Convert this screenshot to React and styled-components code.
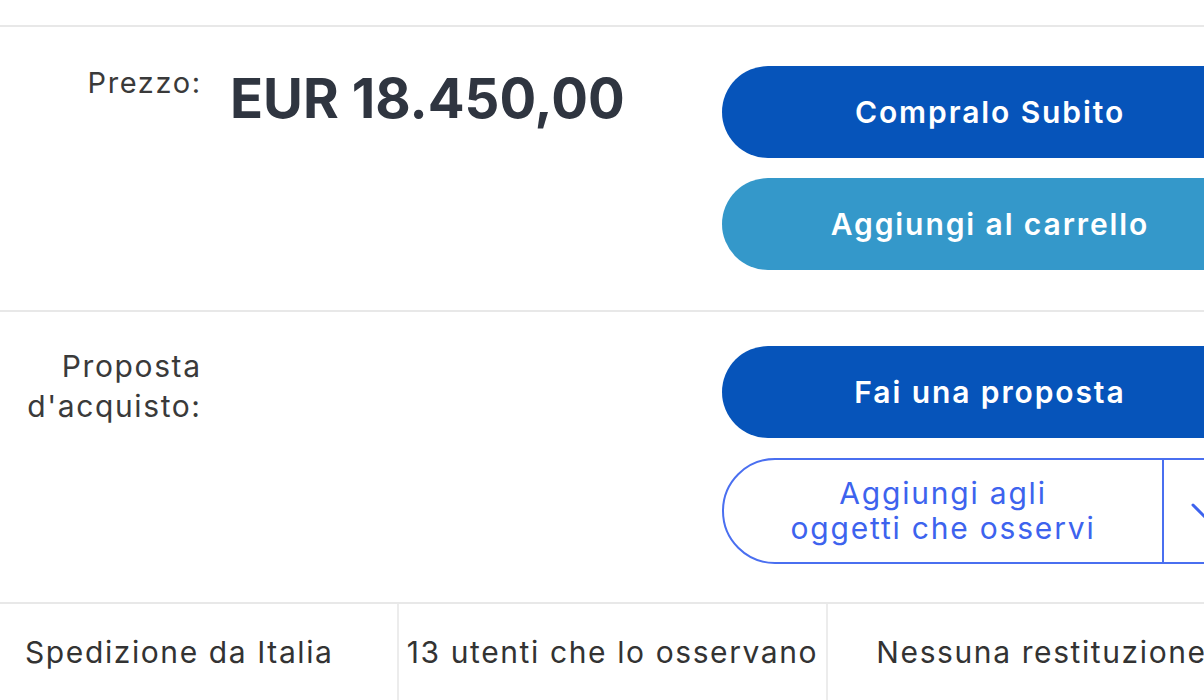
import React from 'react'
import styled, { createGlobalStyle } from 'styled-components'

const GlobalStyle = createGlobalStyle`
  html, body {
    margin: 0;
    padding: 0;
    background: #ffffff;
    overflow: hidden;
  }
  body {
    font-family: Inter, "Open Sans", Arial, sans-serif;
    color: #333333;
  }
`

const Page = styled.div`
  width: 1300px;
  padding-top: 25px;
`

const Section = styled.section`
  display: grid;
  grid-template-columns: 200px 462px 536px;
  column-gap: 30px;
  border-top: 2px solid #e8e8e8;
  padding: ${(p) => p.$pad || '39px 0 40px'};
`

const Label = styled.div`
  text-align: right;
  font-size: ${(p) => p.$size || '30px'};
  line-height: 40px;
  letter-spacing: 1.6px;
  margin-right: -1.6px;
  color: #3a3a3a;
  margin-top: ${(p) => p.$top || '0'};
`

const Price = styled.div`
  font-size: 54.5px;
  font-weight: 700;
  color: #2f3540;
  line-height: 1;
  padding-top: 5px;
`

const Actions = styled.div`
  grid-column: 3;
  display: flex;
  flex-direction: column;
  gap: 20px;
`

const Button = styled.button`
  height: 92px;
  width: 100%;
  border: none;
  border-radius: 46px;
  background: ${(p) => p.$bg};
  color: #ffffff;
  font-family: Inter, "Open Sans", Arial, sans-serif;
  font-size: 30px;
  font-weight: 600;
  letter-spacing: 1.9px;
  cursor: pointer;
`

const WatchButton = styled.div`
  height: 106px;
  box-sizing: border-box;
  border: 2px solid #4a6ff0;
  border-radius: 53px;
  display: grid;
  grid-template-columns: 440px 1fr;
  color: #3d63ee;
  overflow: hidden;
`

const WatchLabel = styled.div`
  display: flex;
  align-items: center;
  justify-content: center;
  text-align: center;
  font-size: 30px;
  line-height: 35px;
  letter-spacing: 1.8px;
  border-right: 2px solid #4a6ff0;
`

const Chevron = styled.div`
  display: flex;
  align-items: center;
  padding-left: 26px;
`

const InfoBar = styled.div`
  display: grid;
  grid-template-columns: 397px 429px 429px;
  border-top: 2px solid #e8e8e8;
  height: 110px;
`

const InfoCell = styled.div`
  display: flex;
  align-items: center;
  justify-content: ${(p) => (p.$first ? 'flex-start' : 'center')};
  padding-left: ${(p) => (p.$first ? '25px' : '0')};
  padding-bottom: 14px;
  border-left: ${(p) => (p.$first ? 'none' : '2px solid #ececec')};
  font-size: 30px;
  color: #333333;
  white-space: nowrap;
  letter-spacing: 1.6px;
`

export default function App() {
  return (
    <>
      <GlobalStyle />
      <Page>
        <Section>
          <Label $size="29px" $top="-3px">Prezzo:</Label>
          <Price>EUR 18.450,00</Price>
          <Actions>
            <Button $bg="#0654ba">Compralo Subito</Button>
            <Button $bg="#3498ca">Aggiungi al carrello</Button>
          </Actions>
        </Section>
        <Section $pad="34px 0 38px">
          <Label $top="0px">
            Proposta
            <br />
            d'acquisto:
          </Label>
          <div />
          <Actions>
            <Button $bg="#0654ba">Fai una proposta</Button>
            <WatchButton>
              <WatchLabel>
                Aggiungi agli
                <br />
                oggetti che osservi
              </WatchLabel>
              <Chevron>
                <svg width="30" height="20" viewBox="0 0 30 20" fill="none">
                  <path d="M3 4 L15 16 L27 4" stroke="#3d63ee" strokeWidth="3" strokeLinecap="round" strokeLinejoin="round" />
                </svg>
              </Chevron>
            </WatchButton>
          </Actions>
        </Section>
        <InfoBar>
          <InfoCell $first>Spedizione da Italia</InfoCell>
          <InfoCell>13 utenti che lo osservano</InfoCell>
          <InfoCell>Nessuna restituzione</InfoCell>
        </InfoBar>
      </Page>
    </>
  )
}
